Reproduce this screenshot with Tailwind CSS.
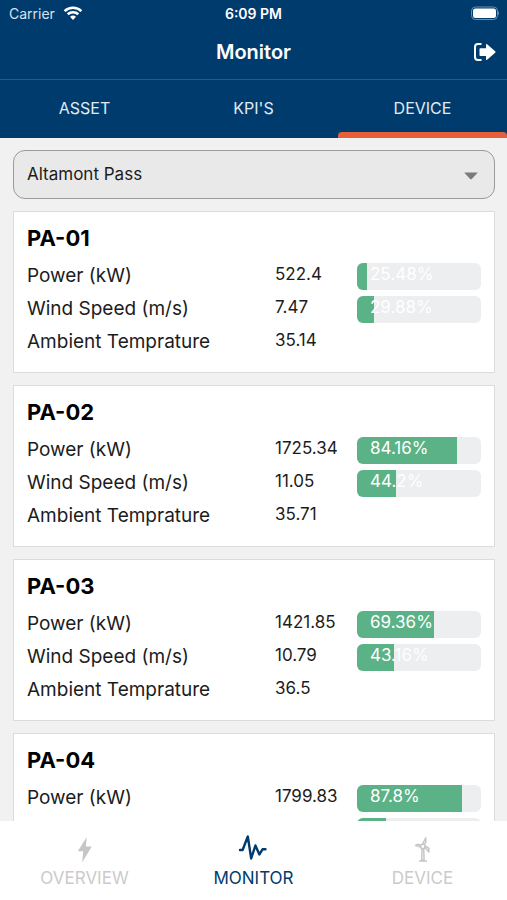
<!DOCTYPE html>
<html lang="en">
<head>
<meta charset="utf-8">
<meta name="viewport" content="width=device-width, initial-scale=1">
<title>Monitor</title>
<script src="https://cdn.jsdelivr.net/npm/@tailwindcss/browser@4"></script>
</head>
<body class="flex h-screen flex-col overflow-hidden bg-[#f1f1f1] font-['Inter','Liberation_Sans',sans-serif] text-[#1c1c1c]">
<header class="shrink-0 bg-[#003b6d] text-white">
  <div class="grid h-7 grid-cols-3 items-center px-2 text-sm">
    <div class="flex items-center gap-2 pl-px text-[#d8e2ec]">
      <span>Carrier</span>
      <svg class="h-4 w-5 text-white" viewBox="0 0 20 16" fill="none" stroke="currentColor" stroke-width="2.6" aria-hidden="true"><path d="M1.600 5.100a12.200 12.200 0 0 1 16.800 0M4.700 8.300a7.700 7.700 0 0 1 10.600 0"/><path d="M10 14l-3-3.200a4.400 4.400 0 0 1 6 0z" fill="currentColor" stroke="none"/></svg>
    </div>
    <span class="text-center font-semibold">6:09 PM</span>
    <svg class="h-4 w-8 justify-self-end" viewBox="0 0 32 16" aria-hidden="true"><rect x="4.500" y="1" width="26" height="12.500" rx="4" fill="none" stroke="#6c8fae"/><rect x="6" y="2.500" width="23" height="9.500" rx="2.500" fill="#fff"/><path d="M31 5q1 .7 1 2.200t-1 2.200z" fill="#6c8fae"/></svg>
  </div>
  <div class="grid h-[51px] grid-cols-[1fr_auto_1fr] items-center px-[11px] pb-[3px]">
    <h1 class="col-start-2 text-xl font-semibold">Monitor</h1>
    <button type="button" aria-label="Log out" class="justify-self-end">
      <svg class="h-5 w-6" viewBox="0 0 24 20" aria-hidden="true"><path d="M9.500 2H6Q3 2 3 5v10q0 3 3 3h3.500" fill="none" stroke="#fff" stroke-width="2"/><path d="M7.500 7q0-.7.7-.7H14V2.800q0-1.500 1.100-.5l8.100 7q.8.700 0 1.400l-8.100 7q-1.100 1-1.100-.5V14H8.200q-.7 0-.7-.7z" fill="#fff"/></svg>
    </button>
  </div>
  <nav aria-label="Monitor views" class="grid h-[59px] grid-cols-3 border-t border-[#2a5a85] text-center text-base text-[#e3ebf2]">
    <a href="#asset" class="flex items-center justify-center pb-0.5">ASSET</a>
    <a href="#kpis" class="flex items-center justify-center pb-0.5">KPI'S</a>
    <a href="#device" aria-current="page" class="relative flex items-center justify-center pb-0.5">DEVICE<span class="absolute inset-x-0 bottom-0 h-1.5 rounded-t bg-[#e65f3a]"></span></a>
  </nav>
</header>

<main class="flex min-h-0 flex-1 flex-col gap-3 overflow-hidden pt-3 pr-3 pl-[13px]">
  <div class="relative shrink-0">
    <select id="site" aria-label="Site" class="block h-[49px] w-full appearance-none rounded-xl border border-[#9b9b9b] bg-[#e9e9e9] px-[13px] pb-0.5 text-[17px] leading-6">
      <option>Altamont Pass</option>
    </select>
    <svg class="pointer-events-none absolute top-5 right-4 h-3 w-4" viewBox="0 0 16 12" aria-hidden="true"><path d="M2 2.500h12q1 0 .2.800l-5.400 5.600q-.8.800-1.600 0L1.800 3.300q-.8-.8.200-.8z" fill="#7b7b7b"/></svg>
  </div>

  <section class="shrink-0 border border-[#dcdcdc] bg-white px-[13px] pt-[11px] pb-3.5">
    <h2 class="mb-1.5 text-[22px] leading-[30px] font-bold text-black">PA-01</h2>
    <table class="w-full table-fixed text-left">
      <colgroup><col><col class="w-[82px]"><col class="w-[124px]"></colgroup>
      <tbody>
        <tr class="h-[33px]"><th scope="row" class="p-0 text-[19px] leading-7 font-normal">Power (kW)</th><td class="p-0 pb-1 text-[17px] leading-6">522.4</td>
          <td class="p-0 pt-0.5"><div class="relative h-[27px] overflow-hidden rounded-md bg-[#eceeef]"><div class="absolute inset-y-0 left-0 bg-[#5bb286]" style="width:8%"></div><span class="relative block pl-[13px] text-[17px] leading-[22px] text-white">25.48%</span></div></td></tr>
        <tr class="h-[33px]"><th scope="row" class="p-0 text-[19px] leading-7 font-normal">Wind Speed (m/s)</th><td class="p-0 pb-1 text-[17px] leading-6">7.47</td>
          <td class="p-0 pt-0.5"><div class="relative h-[27px] overflow-hidden rounded-md bg-[#eceeef]"><div class="absolute inset-y-0 left-0 bg-[#5bb286]" style="width:13.5%"></div><span class="relative block pl-[13px] text-[17px] leading-[22px] text-white">29.88%</span></div></td></tr>
        <tr class="h-[33px]"><th scope="row" class="p-0 text-[19px] leading-7 font-normal">Ambient Temprature</th><td class="p-0 pb-1 text-[17px] leading-6">35.14</td><td class="p-0"></td></tr>
      </tbody>
    </table>
  </section>

  <section class="shrink-0 border border-[#dcdcdc] bg-white px-[13px] pt-[11px] pb-3.5">
    <h2 class="mb-1.5 text-[22px] leading-[30px] font-bold text-black">PA-02</h2>
    <table class="w-full table-fixed text-left">
      <colgroup><col><col class="w-[82px]"><col class="w-[124px]"></colgroup>
      <tbody>
        <tr class="h-[33px]"><th scope="row" class="p-0 text-[19px] leading-7 font-normal">Power (kW)</th><td class="p-0 pb-1 text-[17px] leading-6">1725.34</td>
          <td class="p-0 pt-0.5"><div class="relative h-[27px] overflow-hidden rounded-md bg-[#eceeef]"><div class="absolute inset-y-0 left-0 bg-[#5bb286]" style="width:80.5%"></div><span class="relative block pl-[13px] text-[17px] leading-[22px] text-white">84.16%</span></div></td></tr>
        <tr class="h-[33px]"><th scope="row" class="p-0 text-[19px] leading-7 font-normal">Wind Speed (m/s)</th><td class="p-0 pb-1 text-[17px] leading-6">11.05</td>
          <td class="p-0 pt-0.5"><div class="relative h-[27px] overflow-hidden rounded-md bg-[#eceeef]"><div class="absolute inset-y-0 left-0 bg-[#5bb286]" style="width:31.5%"></div><span class="relative block pl-[13px] text-[17px] leading-[22px] text-white">44.2%</span></div></td></tr>
        <tr class="h-[33px]"><th scope="row" class="p-0 text-[19px] leading-7 font-normal">Ambient Temprature</th><td class="p-0 pb-1 text-[17px] leading-6">35.71</td><td class="p-0"></td></tr>
      </tbody>
    </table>
  </section>

  <section class="shrink-0 border border-[#dcdcdc] bg-white px-[13px] pt-[11px] pb-3.5">
    <h2 class="mb-1.5 text-[22px] leading-[30px] font-bold text-black">PA-03</h2>
    <table class="w-full table-fixed text-left">
      <colgroup><col><col class="w-[82px]"><col class="w-[124px]"></colgroup>
      <tbody>
        <tr class="h-[33px]"><th scope="row" class="p-0 text-[19px] leading-7 font-normal">Power (kW)</th><td class="p-0 pb-1 text-[17px] leading-6">1421.85</td>
          <td class="p-0 pt-0.5"><div class="relative h-[27px] overflow-hidden rounded-md bg-[#eceeef]"><div class="absolute inset-y-0 left-0 bg-[#5bb286]" style="width:62%"></div><span class="relative block pl-[13px] text-[17px] leading-[22px] text-white">69.36%</span></div></td></tr>
        <tr class="h-[33px]"><th scope="row" class="p-0 text-[19px] leading-7 font-normal">Wind Speed (m/s)</th><td class="p-0 pb-1 text-[17px] leading-6">10.79</td>
          <td class="p-0 pt-0.5"><div class="relative h-[27px] overflow-hidden rounded-md bg-[#eceeef]"><div class="absolute inset-y-0 left-0 bg-[#5bb286]" style="width:30%"></div><span class="relative block pl-[13px] text-[17px] leading-[22px] text-white">43.16%</span></div></td></tr>
        <tr class="h-[33px]"><th scope="row" class="p-0 text-[19px] leading-7 font-normal">Ambient Temprature</th><td class="p-0 pb-1 text-[17px] leading-6">36.5</td><td class="p-0"></td></tr>
      </tbody>
    </table>
  </section>

  <section class="shrink-0 border border-[#dcdcdc] bg-white px-[13px] pt-[11px] pb-3.5">
    <h2 class="mb-1.5 text-[22px] leading-[30px] font-bold text-black">PA-04</h2>
    <table class="w-full table-fixed text-left">
      <colgroup><col><col class="w-[82px]"><col class="w-[124px]"></colgroup>
      <tbody>
        <tr class="h-[33px]"><th scope="row" class="p-0 text-[19px] leading-7 font-normal">Power (kW)</th><td class="p-0 pb-1 text-[17px] leading-6">1799.83</td>
          <td class="p-0 pt-0.5"><div class="relative h-[27px] overflow-hidden rounded-md bg-[#eceeef]"><div class="absolute inset-y-0 left-0 bg-[#5bb286]" style="width:85%"></div><span class="relative block pl-[13px] text-[17px] leading-[22px] text-white">87.8%</span></div></td></tr>
        <tr class="h-[33px]"><td class="p-0"></td><td class="p-0"></td>
          <td class="p-0 pt-0.5"><div class="relative h-[27px] overflow-hidden rounded-md bg-[#eceeef]"><div class="absolute inset-y-0 left-0 bg-[#5bb286]" style="width:23.5%"></div></div></td></tr>
      </tbody>
    </table>
  </section>
</main>

<nav aria-label="Main" class="grid shrink-0 grid-cols-3 bg-white pt-3 pb-2.5 text-[17px] leading-6 text-[#cbcbcb]">
  <a href="#overview" class="flex flex-col items-center gap-[3px]">
    <svg class="h-[30px] w-8" viewBox="0 0 32 30" fill="#c6c6c6" aria-hidden="true"><path d="M17.700 4L8.800 18.300h5.500L13.100 29.500 22.800 13.600h-5.900z"/></svg>
    OVERVIEW</a>
  <a href="#monitor" aria-current="page" class="flex flex-col items-center gap-[3px] text-[#003b6d]">
    <svg class="h-[30px] w-8" viewBox="0 0 32 30" fill="none" stroke="currentColor" stroke-width="2.400" stroke-linecap="round" stroke-linejoin="round" aria-hidden="true"><path d="M2 17h2.600L9.800 3.500 13.200 25.500 17.400 12.500 21.400 21.500 24.500 16.300h3"/></svg>
    MONITOR</a>
  <a href="#device-list" class="flex flex-col items-center gap-[3px]">
    <svg class="h-[30px] w-8" viewBox="0 0 32 30" fill="none" stroke="#c6c6c6" stroke-width="1.500" stroke-linejoin="round" aria-hidden="true"><circle cx="15.800" cy="13.500" r="2.200"/><path d="M15.500 11L18.800 4.800V9.300L17.200 11.800M13.600 14L8.500 12.400l2-1.100 3.600.9M17.900 14.300L21.800 19l.1-3.600-3.300-2.300"/><path d="M15 16L14.700 27h2.400L16.700 16M12 28h8"/></svg>
    DEVICE</a>
</nav>
</body>
</html>
